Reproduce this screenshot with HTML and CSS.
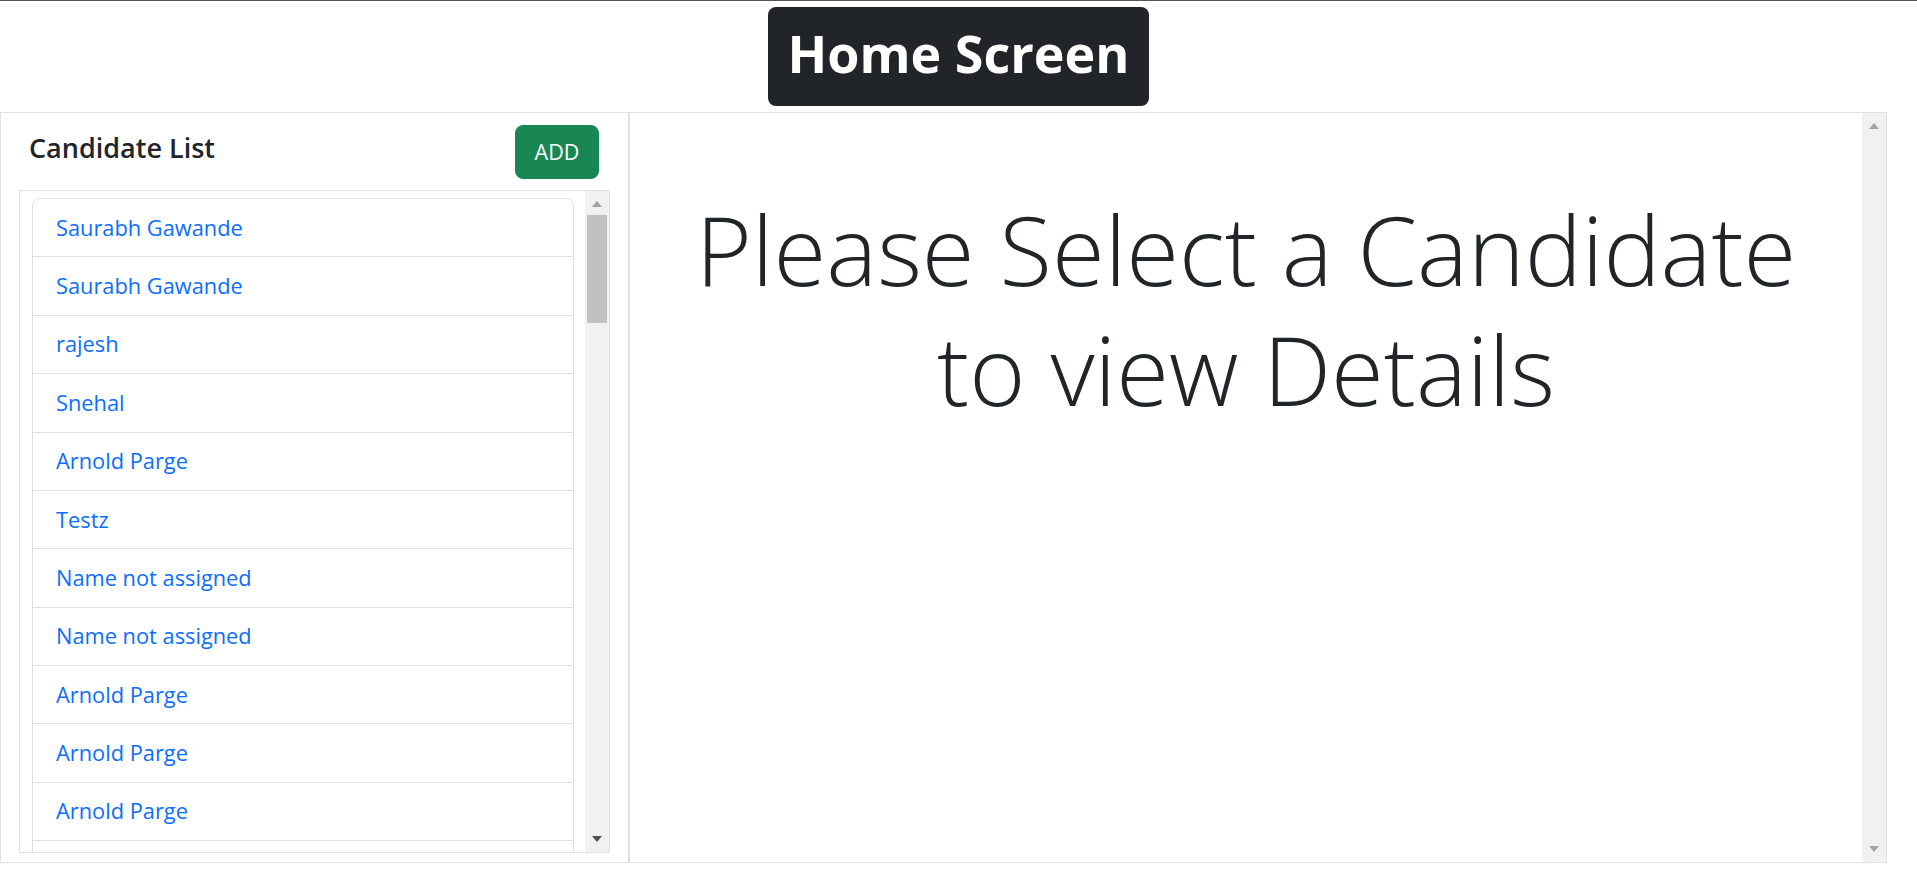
FILE: index.html
```html
<!DOCTYPE html>
<html lang="en">
<head>
<meta charset="utf-8">
<title>Home Screen</title>
<link rel="stylesheet" href="styles.css">
</head>
<body>
<header class="page-header">
  <h1 class="title-badge">Home Screen</h1>
</header>
<main class="layout">
  <section class="panel panel-list">
    <div class="list-head">
      <h4 class="list-title">Candidate List</h4>
      <button class="btn-add" type="button">ADD</button>
    </div>
    <div class="scroll-box">
      <div class="scroll-content">
        <ul class="list-group">
          <li class="list-item"><a href="#">Saurabh Gawande</a></li>
          <li class="list-item"><a href="#">Saurabh Gawande</a></li>
          <li class="list-item"><a href="#">rajesh</a></li>
          <li class="list-item"><a href="#">Snehal</a></li>
          <li class="list-item"><a href="#">Arnold Parge</a></li>
          <li class="list-item"><a href="#">Testz</a></li>
          <li class="list-item"><a href="#">Name not assigned</a></li>
          <li class="list-item"><a href="#">Name not assigned</a></li>
          <li class="list-item"><a href="#">Arnold Parge</a></li>
          <li class="list-item"><a href="#">Arnold Parge</a></li>
          <li class="list-item"><a href="#">Arnold Parge</a></li>
          <li class="list-item"><a href="#">Arnold Parge</a></li>
        </ul>
      </div>
      <div class="fake-scrollbar">
        <div class="sb-btn sb-up"><span class="tri-up disabled"></span></div>
        <div class="sb-track"><div class="sb-thumb"></div></div>
        <div class="sb-btn sb-down"><span class="tri-down"></span></div>
      </div>
    </div>
  </section>
  <section class="panel panel-detail">
    <div class="detail-content">
      <h1 class="display-msg">Please Select a Candidate<br>to view Details</h1>
    </div>
    <div class="fake-scrollbar">
      <div class="sb-btn sb-up"><span class="tri-up disabled"></span></div>
      <div class="sb-track"></div>
      <div class="sb-btn sb-down"><span class="tri-down disabled"></span></div>
    </div>
  </section>
</main>
</body>
</html>
```

FILE: styles.css
```css
* {
  box-sizing: border-box;
}

html, body {
  margin: 0;
  padding: 0;
  background: #ffffff;
}

body {
  border-top: 1px solid #555555;
  font-family: "Open Sans", "Noto Sans", "DejaVu Sans", sans-serif;
  color: #212529;
  width: 1917px;
  height: 882px;
}

.page-header {
  height: 111px;
  padding-top: 6px;
  text-align: center;
}

.title-badge {
  display: inline-block;
  margin: 0;
  background: #212529;
  color: #ffffff;
  font-size: 52px;
  font-weight: 700;
  line-height: 1;
  padding: 20px 20px 27px;
  border-radius: 8px;
  letter-spacing: 0;
}

.layout {
  display: flex;
  width: 1887px;
  height: 751px;
}

.panel {
  border: 1px solid #dee2e6;
  height: 751px;
}

.panel-list {
  width: 629px;
  flex: none;
  display: flex;
  flex-direction: column;
  padding: 12px 18px 9px 18px;
}

.list-head {
  display: flex;
  justify-content: space-between;
  align-items: flex-start;
  padding: 0 11px 0 10px;
  margin-bottom: 11px;
}

.list-title {
  margin: 7px 0 0;
  font-size: 27px;
  font-weight: 600;
  line-height: 1.2;
  color: #212529;
}

.btn-add {
  width: 84px;
  height: 54px;
  background: #198754;
  color: #ffffff;
  border: 1px solid #198754;
  border-radius: 8px;
  font-family: "Open Sans", "Noto Sans", sans-serif;
  font-size: 21.5px;
  line-height: 1;
  padding: 0 0 1px;
}

.scroll-box {
  flex: 1;
  border: 1px solid #dee2e6;
  display: flex;
  min-height: 0;
}

.scroll-content {
  flex: 1;
  overflow: hidden;
  padding: 7px 11px 0 12px;
}

.list-group {
  list-style: none;
  margin: 0;
  padding: 0;
}

.list-item {
  border: 1px solid rgba(0, 0, 0, 0.125);
  border-top-width: 0;
  padding: 13.7px 22px 13.7px 23px;
  font-size: 21.8px;
  line-height: 30px;
}

.list-item:first-child {
  border-top-width: 1px;
  border-top-left-radius: 8px;
  border-top-right-radius: 8px;
}

.list-item a {
  color: #0d6efd;
  text-decoration: none;
}

.fake-scrollbar {
  width: 24px;
  flex: none;
  background: #f1f1f1;
  display: flex;
  flex-direction: column;
}

.sb-btn {
  height: 24px;
  flex: none;
  display: flex;
  justify-content: center;
  align-items: center;
}

.sb-up {
  padding-top: 2px;
}

.sb-down {
  padding-bottom: 2px;
}

.sb-track {
  flex: 1;
}

.sb-thumb {
  height: 108px;
  margin: 0 2px;
  background: #c1c1c1;
}

.tri-up {
  width: 0;
  height: 0;
  border-left: 5.5px solid transparent;
  border-right: 5.5px solid transparent;
  border-bottom: 6px solid #505050;
}

.tri-down {
  width: 0;
  height: 0;
  border-left: 5.5px solid transparent;
  border-right: 5.5px solid transparent;
  border-top: 6px solid #505050;
}

.tri-up.disabled {
  border-bottom-color: #a3a3a3;
}

.tri-down.disabled {
  border-top-color: #a3a3a3;
}

.panel-detail {
  flex: 1;
  display: flex;
}

.detail-content {
  flex: 1;
  padding-top: 76px;
  text-align: center;
}

.display-msg {
  margin: 0;
  font-size: 96px;
  font-weight: 300;
  line-height: 120px;
  color: #212529;
}
```
